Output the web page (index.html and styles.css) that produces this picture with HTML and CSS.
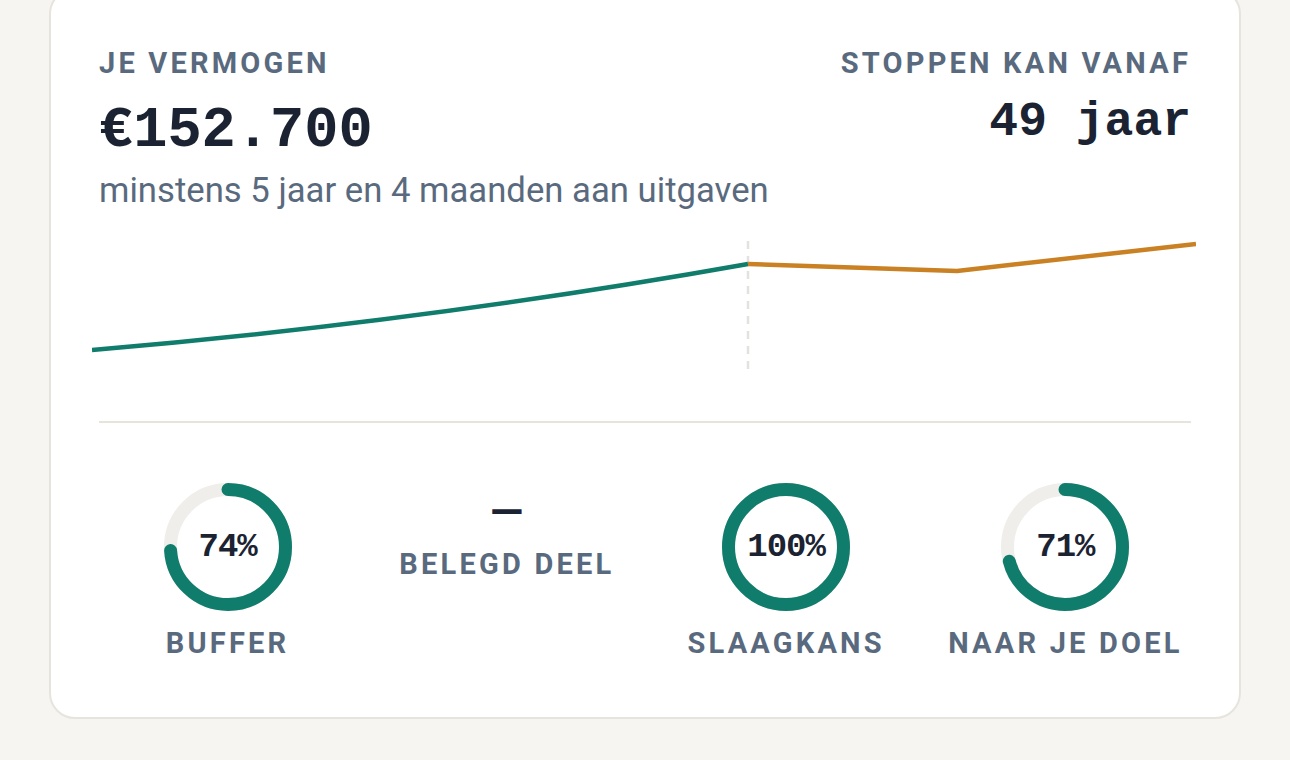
FILE: index.html
```html
<!DOCTYPE html>
<html>
<head>
    <title>Je vermogen</title>
    <link rel="stylesheet" href="styles.css">
</head>
<body>
    <div class="card">
        <div class="summary">
            <div class="wealth">
                <div class="label">Je vermogen</div>
                <div class="amount">€152.700</div>
                <div class="runway">minstens 5 jaar en 4 maanden aan uitgaven</div>
            </div>
            <div class="retire">
                <div class="label">Stoppen kan vanaf</div>
                <div class="age">49 jaar</div>
            </div>
        </div>

        <svg class="chart" width="1104" height="150" viewBox="0 0 1104 150">
            <line x1="656" y1="9" x2="656" y2="140" stroke="#e2e2e0" stroke-width="2.5" stroke-dasharray="8 7"/>
            <path d="M0 118 Q330 90 656 32" fill="none" stroke="#107c6b" stroke-width="4.5"/>
            <path d="M656 32 L865 39 L1104 12" fill="none" stroke="#c98123" stroke-width="4.5" stroke-linejoin="round"/>
        </svg>

        <div class="divider"></div>

        <div class="stats">
            <div class="stat">
                <div class="ring">
                    <svg width="128" height="128" viewBox="0 0 128 128">
                        <circle cx="64" cy="64" r="57.5" class="track"/>
                        <circle cx="64" cy="64" r="57.5" class="fill" pathLength="100" stroke-dasharray="74 100" transform="rotate(-90 64 64)"/>
                    </svg>
                    <div class="pct">74%</div>
                </div>
                <div class="label">Buffer</div>
            </div>
            <div class="stat stat-empty">
                <div class="empty-value">—</div>
                <div class="label">Belegd deel</div>
            </div>
            <div class="stat">
                <div class="ring">
                    <svg width="128" height="128" viewBox="0 0 128 128">
                        <circle cx="64" cy="64" r="57.5" class="track"/>
                        <circle cx="64" cy="64" r="57.5" class="fill"/>
                    </svg>
                    <div class="pct">100%</div>
                </div>
                <div class="label">Slaagkans</div>
            </div>
            <div class="stat">
                <div class="ring">
                    <svg width="128" height="128" viewBox="0 0 128 128">
                        <circle cx="64" cy="64" r="57.5" class="track"/>
                        <circle cx="64" cy="64" r="57.5" class="fill" pathLength="100" stroke-dasharray="71 100" transform="rotate(-90 64 64)"/>
                    </svg>
                    <div class="pct">71%</div>
                </div>
                <div class="label">Naar je doel</div>
            </div>
        </div>
    </div>
</body>
</html>
```

FILE: styles.css
```css
body {
    margin: 0;
    padding: 0 49px;
    background-color: #f6f5f1;
    color: #1b2332;
    font-family: Roboto, "Liberation Sans", sans-serif;
}
.card {
    margin-top: -12px;
    padding: 56px 48px 56px;
    background-color: white;
    border: 2px solid #e6e4dd;
    border-radius: 26px;
}
.summary {
    display: flex;
    justify-content: space-between;
}
.label {
    font-size: 29px;
    line-height: 1.2;
    font-weight: bold;
    letter-spacing: 3.2px;
    text-transform: uppercase;
    color: #5a6a7e;
}
.amount {
    margin-top: 19px;
    font-family: "Liberation Mono", monospace;
    font-size: 57px;
    font-weight: bold;
    line-height: 1.1;
}
.runway {
    margin-top: 8px;
    font-size: 34.7px;
    line-height: 1.2;
    color: #5a6a7e;
}
.retire {
    text-align: right;
}
.age {
    margin-top: 15px;
    font-family: "Liberation Mono", monospace;
    font-size: 48px;
    font-weight: bold;
    line-height: 1.1;
}
.chart {
    display: block;
    margin: 20px 0 0 -7px;
}
.divider {
    height: 2px;
    margin-top: 39px;
    background-color: #e6e4dd;
}
.stats {
    display: grid;
    grid-template-columns: repeat(4, 1fr);
    margin: 60px -14px 0 -11px;
}
.stat {
    display: flex;
    flex-direction: column;
    align-items: center;
    gap: 15px;
}
.ring {
    display: grid;
    place-items: center;
}
.ring svg,
.ring .pct {
    grid-area: 1 / 1;
}
.track,
.fill {
    fill: none;
    stroke-width: 13;
}
.track {
    stroke: #efeeea;
}
.fill {
    stroke: #107c6b;
    stroke-linecap: round;
}
.pct {
    font-family: "Liberation Mono", monospace;
    font-size: 34px;
    font-weight: bold;
    letter-spacing: -1px;
}
.stat-empty {
    gap: 0;
    padding-top: 0;
}
.empty-value {
    margin-bottom: 8px;
    font-family: "Liberation Mono", monospace;
    font-size: 48px;
    font-weight: bold;
    line-height: 56px;
}
```
